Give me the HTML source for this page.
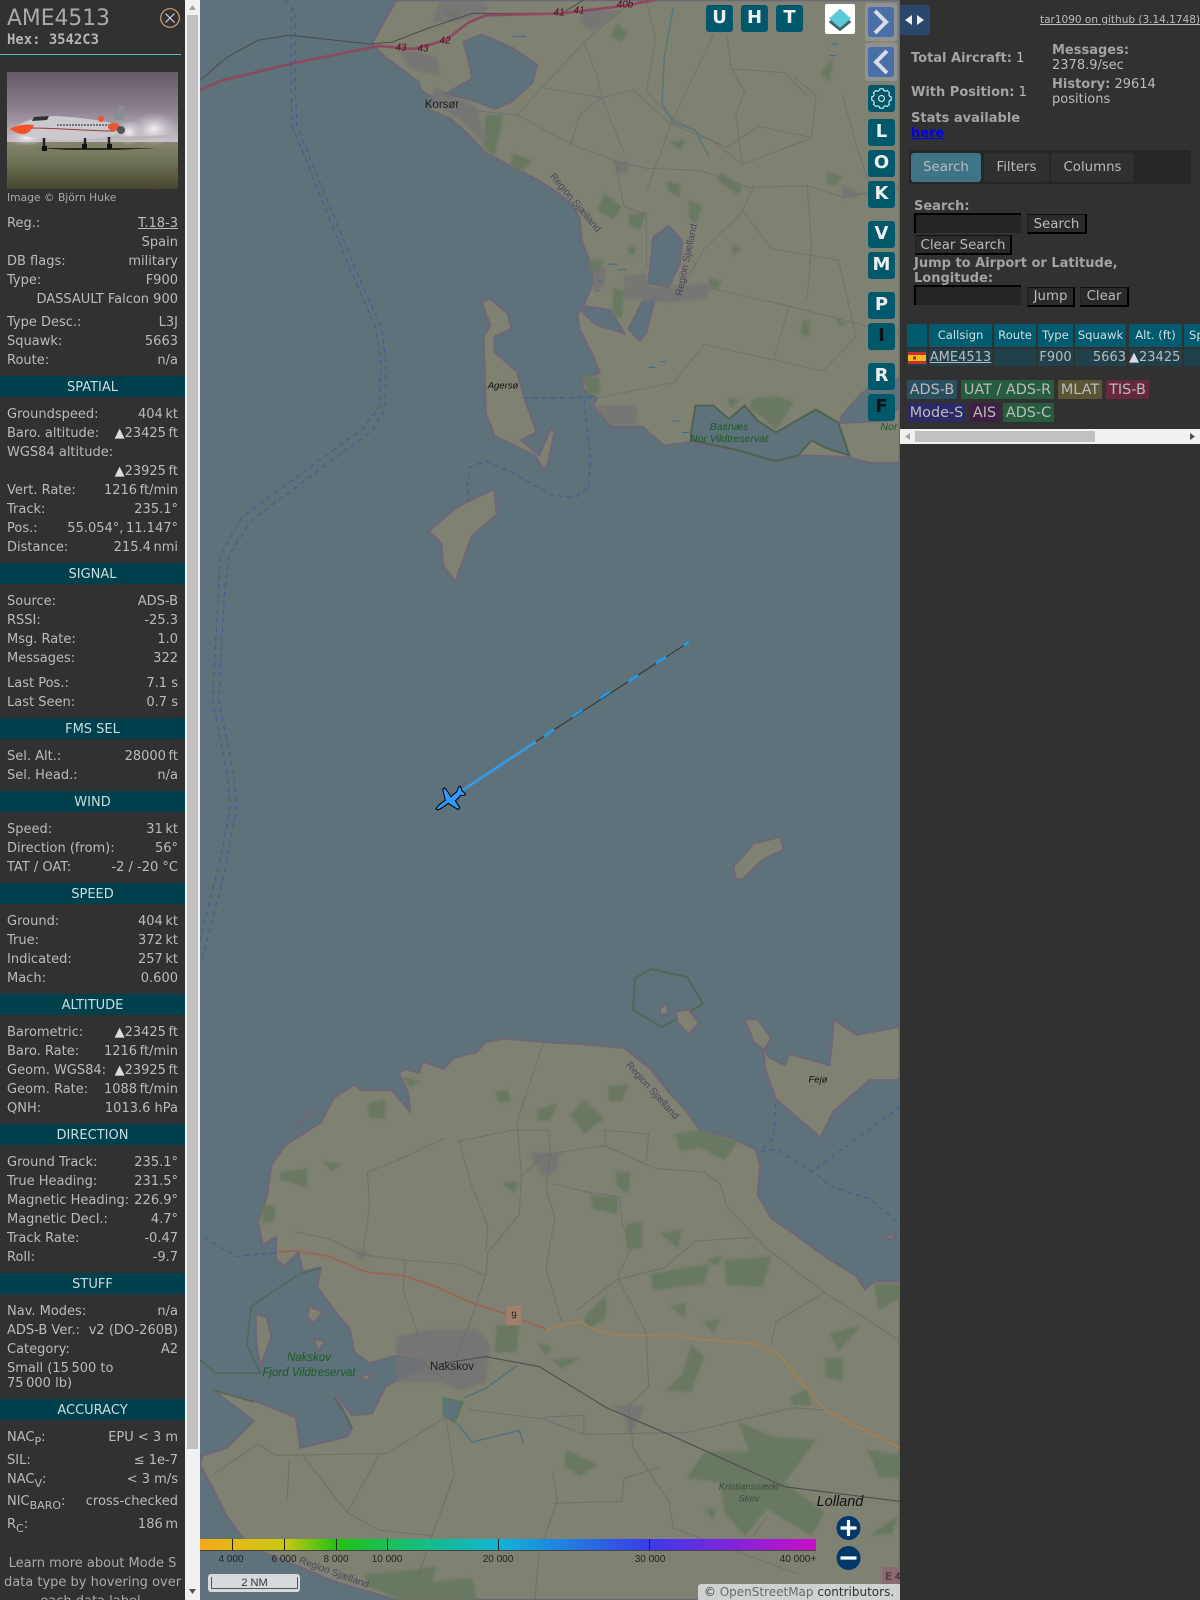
<!DOCTYPE html>
<html><head><meta charset="utf-8"><title>tar1090</title>
<style>
html,body{margin:0;padding:0;width:1200px;height:1600px;overflow:hidden;background:#313131;font-family:"DejaVu Sans",sans-serif;font-size:13px;color:#bbb}
#side{position:absolute;left:0;top:0;width:185px;height:1600px;background:#313131;overflow:hidden}
.r{position:absolute;left:7px;width:171px;margin-top:1px;display:flex;justify-content:space-between;line-height:19px;height:19px;white-space:nowrap}
.b{position:absolute;left:0;width:185px;height:21px;line-height:23px;background:#003f4c;color:#c8dde0;text-align:center}
.u{color:#ddd}
sub{font-size:11px;line-height:0;vertical-align:-4px}
#sb{position:absolute;left:185px;top:0;width:15px;height:1600px;background:#f1f1f1}
#map{position:absolute;left:200px;top:0;width:700px;height:1600px;background:#5d727a;overflow:hidden}
.mb{position:absolute;width:27px;height:27px;background:#00586a;border-radius:3px;color:#eee;font-weight:bold;font-size:18px;line-height:26px;text-align:center}
#right{position:absolute;left:900px;top:0;width:300px;height:1600px;background:#313131;overflow:hidden}
.a{position:absolute;white-space:nowrap;line-height:15px}
.bd{font-weight:bold;color:#a3a3a3}
.tab{position:absolute;top:153px;height:29px;line-height:29px;font-size:13.33px;text-align:center;border-radius:3px;background:#303030;color:#bbb}
.in{position:absolute;box-sizing:border-box;width:107px;height:20px;background:#252525;border-top:2px solid #000;border-left:2px solid #000}
.bt{position:absolute;box-sizing:border-box;height:20px;line-height:17px;font-size:13.33px;background:#2a2a2a;border-right:2px solid #000;border-bottom:2px solid #000;border-top:1px solid #111;border-left:1px solid #222;text-align:center;color:#bbb}
.th{position:absolute;top:324px;height:23px;line-height:22px;background:#005b6e;color:#cfdfe2;font-size:11.6px;text-align:center;white-space:nowrap;overflow:hidden}
.td{position:absolute;top:349px;height:17px;line-height:17px;background:#20414c;color:#bbb;white-space:nowrap;overflow:hidden}
.lg{position:absolute;height:19px;line-height:20px;font-size:14.4px;text-align:center;color:#bbb}
.cl{position:absolute;top:1554px;font:10px "Liberation Sans",sans-serif;color:#222;transform:translateX(-50%)}
</style></head><body>

<div id="side">
<div class="a" style="left:7px;top:6px;font-size:21.8px;line-height:26px;color:#aaa">AME4513</div>
<svg style="position:absolute;left:159px;top:7px" width="22" height="22" viewBox="0 0 22 22"><circle cx="11" cy="11" r="9.3" fill="none" stroke="#d0a070" stroke-width="1.2"/><path d="M6.5 6.5L15.5 15.5M15.5 6.5L6.5 15.5" stroke="#ddd" stroke-width="1.1"/></svg>
<div class="a" style="left:7px;top:32px;font:bold 13.9px 'DejaVu Sans Mono',monospace;line-height:16px;color:#b5b5b5">Hex: 3542C3</div>
<div style="position:absolute;left:0;top:54px;width:181px;height:1px;background:#57b9c4"></div>

<svg style="position:absolute;left:7px;top:72px" width="171" height="117" viewBox="0 0 171 117">
<defs><linearGradient id="sky" x1="0" y1="0" x2="0" y2="1"><stop offset="0" stop-color="#645a66"/><stop offset=".5" stop-color="#8a7f8c"/><stop offset="1" stop-color="#c9c2cc"/></linearGradient>
<linearGradient id="gr" x1="0" y1="0" x2="0" y2="1"><stop offset="0" stop-color="#85866c"/><stop offset=".5" stop-color="#6a6d50"/><stop offset="1" stop-color="#45462f"/></linearGradient>
<radialGradient id="gl"><stop offset="0" stop-color="#f4f0f6"/><stop offset="1" stop-color="#c7c0c9" stop-opacity="0"/></radialGradient></defs>
<rect width="171" height="72" fill="url(#sky)"/><rect y="70" width="171" height="47" fill="url(#gr)"/>
<ellipse cx="147" cy="57" rx="24" ry="17" fill="url(#gl)"/><ellipse cx="122" cy="60" rx="14" ry="14" fill="url(#gl)"/><ellipse cx="20" cy="66" rx="20" ry="8" fill="url(#gl)"/>
<path d="M30 76H150L110 78H60Z" fill="#2a2a25"/>
<path d="M100 65L168 63V65L120 69Z" fill="#b8b6b6"/>
<path d="M107 48L113 34H117L116 49Z" fill="#8a8d96"/>
<path d="M92 49L130 47V49L100 52Z" fill="#9a9aa0"/>
<path d="M3 57C14 51 28 44 48 44C70 45 100 49 116 54C120 58 118 60 112 62C90 68 60 71 24 65C14 63 7 61 3 57Z" fill="#c9c9ce"/>
<path d="M3 57C9 53 18 52 27 53C24 59 20 63 14 62C9 61 6 59 3 57Z" fill="#f2522a"/>
<path d="M27 45L42 44L40 48L25 49Z" fill="#333"/>
<path d="M50 53H110" stroke="#444" stroke-width="1.3" stroke-dasharray="2 1"/>
<path d="M24 56C50 56 85 59 108 59" stroke="#a23a3a" stroke-width="1" fill="none"/>
<ellipse cx="107" cy="55" rx="6" ry="4" fill="#e8553a"/><ellipse cx="94" cy="47" rx="3" ry="3" fill="#e8553a"/><circle cx="114" cy="58" r="4" fill="#555"/>
<path d="M37 66V78M78 66V76M102 65V76" stroke="#222" stroke-width="2.5"/>
<rect x="35" y="74" width="5" height="5" fill="#111"/><rect x="75" y="72" width="5" height="5" fill="#111"/><rect x="100" y="72" width="5" height="5" fill="#111"/>
<path d="M146 117L171 96" stroke="#9a3a2a" stroke-dasharray="2 3"/>
</svg>
<div class="a" style="left:7px;top:190px;font-size:10.7px;color:#aaa">Image © Björn Huke</div>

<div class="r" style="top:213px"><span>Reg.:</span><span style="text-decoration:underline">T.18-3</span></div>
<div class="r" style="top:232px"><span></span><span>Spain</span></div>
<div class="r" style="top:251px"><span>DB flags:</span><span>military</span></div>
<div class="r" style="top:270px"><span>Type:</span><span>F900</span></div>
<div class="r" style="top:289px"><span></span><span>DASSAULT Falcon 900</span></div>
<div class="r" style="top:312px"><span>Type Desc.:</span><span>L3J</span></div>
<div class="r" style="top:331px"><span>Squawk:</span><span>5663</span></div>
<div class="r" style="top:350px"><span>Route:</span><span>n/a</span></div>

<div class="b" style="top:376px">SPATIAL</div>
<div class="r" style="top:404px"><span>Groundspeed:</span><span>404&#8239;kt</span></div>
<div class="r" style="top:423px"><span>Baro. altitude:</span><span><span class="u">▲</span>23425&#8239;ft</span></div>
<div class="r" style="top:442px"><span>WGS84 altitude:</span></div>
<div class="r" style="top:461px"><span></span><span><span class="u">▲</span>23925&#8239;ft</span></div>
<div class="r" style="top:480px"><span>Vert. Rate:</span><span>1216&#8239;ft/min</span></div>
<div class="r" style="top:499px"><span>Track:</span><span>235.1°</span></div>
<div class="r" style="top:518px"><span>Pos.:</span><span>55.054°,&#8239;11.147°</span></div>
<div class="r" style="top:537px"><span>Distance:</span><span>215.4&#8239;nmi</span></div>

<div class="b" style="top:563px">SIGNAL</div>
<div class="r" style="top:591px"><span>Source:</span><span>ADS-B</span></div>
<div class="r" style="top:610px"><span>RSSI:</span><span>-25.3</span></div>
<div class="r" style="top:629px"><span>Msg. Rate:</span><span>1.0</span></div>
<div class="r" style="top:648px"><span>Messages:</span><span>322</span></div>
<div class="r" style="top:673px"><span>Last Pos.:</span><span>7.1 s</span></div>
<div class="r" style="top:692px"><span>Last Seen:</span><span>0.7 s</span></div>

<div class="b" style="top:718px">FMS SEL</div>
<div class="r" style="top:746px"><span>Sel. Alt.:</span><span>28000&#8239;ft</span></div>
<div class="r" style="top:765px"><span>Sel. Head.:</span><span>n/a</span></div>

<div class="b" style="top:791px">WIND</div>
<div class="r" style="top:819px"><span>Speed:</span><span>31&#8239;kt</span></div>
<div class="r" style="top:838px"><span>Direction (from):</span><span>56°</span></div>
<div class="r" style="top:857px"><span>TAT / OAT:</span><span>-2 / -20 °C</span></div>

<div class="b" style="top:883px">SPEED</div>
<div class="r" style="top:911px"><span>Ground:</span><span>404&#8239;kt</span></div>
<div class="r" style="top:930px"><span>True:</span><span>372&#8239;kt</span></div>
<div class="r" style="top:949px"><span>Indicated:</span><span>257&#8239;kt</span></div>
<div class="r" style="top:968px"><span>Mach:</span><span>0.600</span></div>

<div class="b" style="top:994px">ALTITUDE</div>
<div class="r" style="top:1022px"><span>Barometric:</span><span><span class="u">▲</span>23425&#8239;ft</span></div>
<div class="r" style="top:1041px"><span>Baro. Rate:</span><span>1216&#8239;ft/min</span></div>
<div class="r" style="top:1060px"><span>Geom. WGS84:</span><span><span class="u">▲</span>23925&#8239;ft</span></div>
<div class="r" style="top:1079px"><span>Geom. Rate:</span><span>1088&#8239;ft/min</span></div>
<div class="r" style="top:1098px"><span>QNH:</span><span>1013.6 hPa</span></div>

<div class="b" style="top:1124px">DIRECTION</div>
<div class="r" style="top:1152px"><span>Ground Track:</span><span>235.1°</span></div>
<div class="r" style="top:1171px"><span>True Heading:</span><span>231.5°</span></div>
<div class="r" style="top:1190px"><span>Magnetic Heading:</span><span>226.9°</span></div>
<div class="r" style="top:1209px"><span>Magnetic Decl.:</span><span>4.7°</span></div>
<div class="r" style="top:1228px"><span>Track Rate:</span><span>-0.47</span></div>
<div class="r" style="top:1247px"><span>Roll:</span><span>-9.7</span></div>

<div class="b" style="top:1273px">STUFF</div>
<div class="r" style="top:1301px"><span>Nav. Modes:</span><span>n/a</span></div>
<div class="r" style="top:1320px"><span>ADS-B Ver.:</span><span>v2 (DO-260B)</span></div>
<div class="r" style="top:1339px"><span>Category:</span><span>A2</span></div>
<div class="r" style="top:1358px"><span>Small (15&#8239;500 to</span></div>
<div class="r" style="top:1373px"><span>75&#8239;000 lb)</span></div>

<div class="b" style="top:1399px">ACCURACY</div>
<div class="r" style="top:1427px"><span>NAC<sub>P</sub>:</span><span>EPU &lt; 3 m</span></div>
<div class="r" style="top:1450px"><span>SIL:</span><span>≤ 1e-7</span></div>
<div class="r" style="top:1469px"><span>NAC<sub>V</sub>:</span><span>&lt; 3 m/s</span></div>
<div class="r" style="top:1491px"><span>NIC<sub>BARO</sub>:</span><span>cross-checked</span></div>
<div class="r" style="top:1514px"><span>R<sub>C</sub>:</span><span>186&#8239;m</span></div>
<div style="position:absolute;left:0;width:185px;top:1554px;line-height:19px;text-align:center;color:#aaa">Learn more about Mode S<br>data type by hovering over<br>each data label.</div>
</div>

<div id="sb">
<svg width="15" height="1600" style="position:absolute;left:0;top:0"><rect x="2" y="15" width="11" height="1434" fill="#c1c1c1"/><path d="M7.5 5L11 10H4Z" fill="#a3a3a3"/><path d="M4 1589H11L7.5 1594Z" fill="#505050"/></svg>
</div>

<div id="map">
<svg width="700" height="1600" style="position:absolute;left:0;top:0">
<defs><filter id="bl" x="-5%" y="-5%" width="110%" height="110%"><feGaussianBlur stdDeviation="2.5"/></filter></defs>
<!-- TOP -->
<g transform="scale(.4464,.3827)">
<g fill="#7f8172" stroke="#6d6878" stroke-width="2.4">
<path vector-effect="non-scaling-stroke" d="M440 0L410 60L385 115L415 150L450 180L490 215L495 235L530 265L510 285L560 310L600 350L640 400L680 425L740 460L790 495L830 530L850 570L855 630L875 690L880 740L865 780L855 810L845 820L850 860L880 930L895 975L855 990L860 1020L890 1040L880 1060L920 1115L990 1115L1040 1165L1100 1155L1220 1180L1290 1205L1340 1190L1450 1195L1500 1210L1568 1210L1568 0Z"/>
<path vector-effect="non-scaling-stroke" d="M630 790L650 780L690 820L698 860L660 880L660 920L710 970L730 1050L755 1130L720 1150L760 1190L785 1120L795 1125L780 1210L770 1228L750 1190L660 1140L640 1080L635 880L650 850Z"/>
<path vector-effect="non-scaling-stroke" d="M660 1278L665 1345L610 1400L572 1520L545 1480L540 1420L512 1388L570 1330L600 1310Z"/>
</g>
<g fill="#5d727a" stroke="#6d6878" stroke-width="2">
<path vector-effect="non-scaling-stroke" d="M590 110L630 90L700 125L755 170L745 215L700 265L660 285L620 265L550 245L610 205L600 150Z"/>
<path vector-effect="non-scaling-stroke" d="M1015 620L1050 590L1080 630L1075 690L1050 750L1005 740L1010 680Z"/>
<path vector-effect="non-scaling-stroke" d="M1020 775L1000 870L985 890L960 860L990 790Z"/>
<path vector-effect="non-scaling-stroke" d="M860 800L920 810L950 870L890 850L860 820Z"/>
<path vector-effect="non-scaling-stroke" d="M1435 1090L1480 1030L1520 995L1568 990L1568 1060L1540 1100L1435 1105Z"/>
</g>
<path vector-effect="non-scaling-stroke" d="M1100 1130L1110 1060L1150 1060L1185 1095L1220 1060L1250 1100L1290 1130L1350 1090L1380 1070L1430 1105L1455 1190L1400 1170L1370 1150L1340 1190L1290 1205L1200 1175L1100 1150Z" fill="#5d727a" stroke="#4f6350" stroke-width="2"/>
<g fill="#697861" filter="url(#bl)">
<path d="M640 300L680 300L660 410L635 385Z M700 400L745 420L720 450L695 430Z M905 505L945 540L925 575L890 550Z M960 560L1000 555L985 600L960 590Z M1095 520L1125 540L1110 585L1095 570Z M1165 450L1215 490L1205 510L1160 470Z M1045 475L1075 480L1075 515L1050 500Z M1405 450L1440 460L1425 485L1405 480Z M925 750L950 760L945 830L925 825Z M1350 835L1365 840L1365 880L1345 875Z M1140 725L1170 735L1160 755L1140 750Z M1425 830L1450 850L1430 850Z M855 980L895 985L895 1030L870 1030Z M1240 1040L1290 1035L1330 1050L1290 1125L1260 1090L1230 1070Z M935 60L960 90L940 110L920 95Z M1050 370L1090 365L1075 390Z M870 680L905 680L890 720L875 710Z M960 645L975 645L975 665L960 665Z M545 30L585 25L570 55Z M1180 1040L1210 1045L1190 1065Z M1190 640L1215 650L1195 665Z M1390 190L1420 150L1410 215Z"/>
</g>
<g fill="#737274" opacity=".7" filter="url(#bl)">
<path d="M530 230L620 280L640 380L580 310L510 260Z M950 720L1000 715L1005 745L1030 750L1140 740L1135 780L1050 790L950 780Z M880 1060L980 1060L975 1110L920 1110Z M520 60L610 50L650 20L620 0L540 0Z M860 20L940 30L880 80L850 60Z M440 120L530 150L540 200L470 180Z M930 420L960 425L955 455L930 450Z M1440 480L1480 510L1440 520Z M880 700L910 700L905 750L880 760Z"/>
</g>
<g fill="none" stroke="#6b6d6f" stroke-width="1" opacity=".75">
<path vector-effect="non-scaling-stroke" d="M580 285L710 300L790 350L840 380L930 420L1000 440L1120 445L1230 490L1360 485L1440 515L1568 490"/>
<path vector-effect="non-scaling-stroke" d="M710 300L860 110L950 20"/>
<path vector-effect="non-scaling-stroke" d="M1000 500L1060 310L1150 90"/>
<path vector-effect="non-scaling-stroke" d="M1240 490L1210 560L1130 650L1070 770"/>
<path vector-effect="non-scaling-stroke" d="M930 420L950 540L1000 560L1000 600L1000 700"/>
<path vector-effect="non-scaling-stroke" d="M860 110L890 200L900 255L950 400"/>
<path vector-effect="non-scaling-stroke" d="M770 230L900 255L970 235L1050 320L1180 385L1250 330L1370 360"/>
<path vector-effect="non-scaling-stroke" d="M1130 750L1320 800L1568 875"/>
<path vector-effect="non-scaling-stroke" d="M1320 800L1285 940L1395 970L1470 880"/>
<path vector-effect="non-scaling-stroke" d="M890 1040L1060 1000L1130 900L1280 940"/>
<path vector-effect="non-scaling-stroke" d="M1190 180L1220 240L1200 300L1215 430L1370 360L1380 250L1330 200"/>
<path vector-effect="non-scaling-stroke" d="M1360 485L1370 640L1360 780"/>
<path vector-effect="non-scaling-stroke" d="M1215 550L1280 650L1430 680L1470 880"/>
<path vector-effect="non-scaling-stroke" d="M1440 250L1470 380L1500 480"/>
<path vector-effect="non-scaling-stroke" d="M1000 0L1020 100L1000 240L1060 310L1150 370L1215 430"/>
<path vector-effect="non-scaling-stroke" d="M850 300L830 380M900 255L850 300"/>
<path vector-effect="non-scaling-stroke" d="M1180 90L1190 180L1310 190L1360 250"/>
</g>
<path vector-effect="non-scaling-stroke" d="M1060 20L1040 150L1035 270L1060 320L1110 340L1140 410" fill="none" stroke="#57767a" stroke-width="1.3"/>
<path vector-effect="non-scaling-stroke" d="M0 210L60 150L130 105L200 92L380 115L430 110L520 70L610 35L810 35L860 0" fill="none" stroke="#4a4c4e" stroke-width="1"/>
<path vector-effect="non-scaling-stroke" d="M0 235L50 210L210 165L400 120L480 128L550 105L600 60L640 40L810 35L950 15L1020 0" fill="none" stroke="#8d4960" stroke-width="2.6"/>
<g fill="none" stroke="#3a4fa0" stroke-width="1" stroke-dasharray="5 4" opacity=".7">
<path vector-effect="non-scaling-stroke" d="M205 20L203 200L207 330L265 500L335 700L395 860L405 950L403 1060L365 1120L95 1350L45 1450L40 1568"/>
<path vector-effect="non-scaling-stroke" d="M190 0L213 30L213 200L217 330L277 500L347 700L407 860L417 950L415 1070L385 1125L115 1360L65 1450L53 1568"/>
<path vector-effect="non-scaling-stroke" d="M725 1040L880 1038"/>
<path vector-effect="non-scaling-stroke" d="M860 1045L875 1200L870 1275L840 1300L790 1295L700 1235L640 1205L605 1220L598 1270L603 1310"/>
</g>
<g stroke="#3f6a9a" stroke-width="1"><path vector-effect="non-scaling-stroke" d="M915 690H935M935 705H955M890 735H905M885 760H895M1005 960H1020M1030 945H1045M1060 1100H1075M1080 1130H1095M700 95H730M1415 115H1430M1410 145H1425"/></g>
</g>

<!-- MID -->
<g transform="translate(0,600) scale(.4464,.3333)">
<path vector-effect="non-scaling-stroke" d="M1195 800L1240 730L1300 710L1308 750L1260 780L1215 840L1198 835Z" fill="#7f8172" stroke="#6d6878" stroke-width="2.4"/>
<g fill="none" stroke="#3a4fa0" stroke-width="1" stroke-dasharray="5 4" opacity=".7">
<path vector-effect="non-scaling-stroke" d="M40 0L28 300L60 520L68 620L45 780L0 1020"/>
<path vector-effect="non-scaling-stroke" d="M54 0L42 300L75 520L82 620L58 800L5 1080"/>
</g>
</g>
<path d="M435 978L451 969L487 977L503 1004L462 1027L433 1010Z" fill="none" stroke="#4f6a58" stroke-width="2"/>

<!-- BOTTOM -->
<g transform="translate(0,1000) scale(.4464,.3827)">
<path vector-effect="non-scaling-stroke" fill="#7f8172" stroke="#6d6878" stroke-width="2.4" d="M0 1215L30 1280L60 1350L110 1430L200 1470L300 1520L440 1568L1568 1568L1568 735L1510 735L1490 755L1470 720L1400 670L1330 610L1280 570L1250 510L1255 430L1245 390L1190 360L1120 340L1090 290L1050 240L1010 180L950 125L860 115L770 110L680 100L640 110L620 135L570 150L545 180L500 160L490 190L460 180L445 190L465 240L470 290L430 235L360 235L345 220L300 255L270 320L190 380L160 430L150 510L130 580L140 640L170 620L170 680L190 695L220 660L230 710L270 700L262 750L300 810L335 860L345 920L380 950L440 930L490 940L500 960L445 990L415 1010L385 1080L340 1085L300 1020L340 1120L330 1140L225 1170L215 1090L130 1050L30 1020L120 1100L60 1170L5 1190Z"/>
<g fill="#7f8172" stroke="#6d6878" stroke-width="2.4">
<path vector-effect="non-scaling-stroke" d="M1220 50L1250 50L1280 100L1265 130L1275 150L1310 170L1320 140L1410 170L1420 50L1470 90L1568 70L1568 210L1500 210L1420 290L1390 360L1340 310L1290 260L1265 180L1262 130L1240 110Z"/>
<path vector-effect="non-scaling-stroke" d="M1065 30L1095 25L1118 60L1095 90L1070 60Z"/>
<path vector-effect="non-scaling-stroke" d="M125 820L150 830L160 880L135 960L125 890Z"/>
<path vector-effect="non-scaling-stroke" d="M245 800L275 815L255 845L240 830Z"/>
<path vector-effect="non-scaling-stroke" d="M255 885L280 890L265 920Z"/>
<path vector-effect="non-scaling-stroke" d="M355 985L385 975L375 995Z"/>
<path vector-effect="non-scaling-stroke" d="M1525 620L1560 610L1550 625Z"/>
<path vector-effect="non-scaling-stroke" d="M215 330L240 295L260 290L235 305L220 332Z"/>
<path vector-effect="non-scaling-stroke" d="M1030 20L1045 10L1050 35L1030 40Z"/>
</g>
<path vector-effect="non-scaling-stroke" d="M545 1040L590 1050L570 1105L545 1085Z" fill="#5d727a" stroke="#5a7a50" stroke-width="1.5"/>
<path vector-effect="non-scaling-stroke" d="M0 940L35 975L135 975L105 900L115 800L225 715L270 700" fill="none" stroke="#4f6a58" stroke-width="1.6"/>
<path vector-effect="non-scaling-stroke" d="M300 1040L330 1090L340 1120M440 930L490 940L540 985M30 1020L120 1050" fill="none" stroke="#4f6a58" stroke-width="1.6"/>
<g fill="#697861" filter="url(#bl)">
<path d="M660 240L690 235L695 265L670 270Z M830 300L860 260L905 310L860 350Z M755 285L800 270L785 315L755 315Z M915 225L960 220L945 265L915 265Z M1065 350L1120 340L1205 370L1175 420L1120 385L1075 395Z M875 510L935 515L935 560L880 545Z M955 585L990 580L990 650L955 650Z M1175 680L1280 670L1260 750L1180 745Z M1010 715L1140 690L1130 740L1015 760Z M665 850L715 850L710 920L660 920Z M1040 1020L1080 980L1100 900L1130 930L1100 1025Z M1205 1100L1280 1140L1380 1150L1310 1260L1400 1340L1370 1400L1270 1330L1220 1400L1175 1340L1165 1260L1090 1250L1130 1180L1230 1180Z M820 1175L890 1215L850 1245L815 1215Z M1410 870L1480 850L1430 920Z M1400 935L1440 935L1440 995L1400 985Z M1495 1175L1568 1190L1568 1250L1520 1245Z M790 940L850 935L810 965Z M1320 1040L1360 1015L1370 1060L1330 1060Z M140 535L170 540L165 580L140 585Z M370 1500L470 1490L530 1480L520 1520L610 1510L620 1568L450 1568L370 1530Z M180 450L240 440L240 490L180 470Z M275 420L315 430L295 450Z M1510 740L1568 740L1568 780L1520 810Z M1050 800L1090 790L1085 830Z M930 450L965 450L960 505L935 490Z M1125 840L1165 835L1150 870Z M860 830L910 770L910 830L870 860Z M375 270L415 260L415 310L380 310Z M455 200L495 215L470 230Z M1500 1400L1565 1345L1550 1395Z M1130 1330L1155 1330L1150 1360Z M675 480L710 475L705 505Z M755 895L790 905L775 930Z M1135 680L1170 665L1160 695Z M1030 610L1080 600L1070 650Z"/>
</g>
<g fill="#737274" opacity=".75" filter="url(#bl)">
<path d="M440 880L520 860L620 860L650 900L640 1000L580 1020L540 1000L440 1000Z M740 400L805 400L800 450L770 460L750 430Z M925 1060L995 1060L985 1095L960 1140L950 1090Z M345 650L380 660L360 685Z"/>
</g>
<g fill="none" stroke="#696b6e" stroke-width="1" opacity=".75">
<path vector-effect="non-scaling-stroke" d="M720 460L770 405L905 380L1020 440L1130 450L1165 480L1180 540L1270 650L1400 765L1568 890"/>
<path vector-effect="non-scaling-stroke" d="M770 110L710 320L720 460L715 560L645 660L640 720L600 860L570 940"/>
<path vector-effect="non-scaling-stroke" d="M575 370L700 340L780 340L785 400L775 490L795 570L775 700L810 840"/>
<path vector-effect="non-scaling-stroke" d="M210 605L290 625L360 665L460 680L580 690L640 720"/>
<path vector-effect="non-scaling-stroke" d="M580 370L610 490L645 590L640 660"/>
<path vector-effect="non-scaling-stroke" d="M375 450L380 540L365 660M375 450L440 420L550 360"/>
<path vector-effect="non-scaling-stroke" d="M460 680L455 760L490 880"/>
<path vector-effect="non-scaling-stroke" d="M600 1070L770 1095L860 1135L1090 1130L1330 1065L1400 1072"/>
<path vector-effect="non-scaling-stroke" d="M960 1060L970 1170L1050 1310L1060 1380L1340 1500"/>
<path vector-effect="non-scaling-stroke" d="M130 1160L170 1190L420 1185L550 1090"/>
<path vector-effect="non-scaling-stroke" d="M550 1090L570 1240L520 1400L470 1568"/>
<path vector-effect="non-scaling-stroke" d="M790 480L860 500L940 515L945 580L965 650L935 725L1000 870L1005 1010L960 1060"/>
<path vector-effect="non-scaling-stroke" d="M845 810L935 730L1040 700L1110 630L1240 620"/>
<path vector-effect="non-scaling-stroke" d="M790 1230L800 1310L760 1440L750 1568"/>
<path vector-effect="non-scaling-stroke" d="M790 1315L945 1310L950 1250L1030 1220"/>
<path vector-effect="non-scaling-stroke" d="M230 1190L330 1340L400 1190M330 1340L400 1385L520 1400"/>
<path vector-effect="non-scaling-stroke" d="M1400 765L1290 840L1280 900M905 340L1005 350L1000 420M905 340L910 380"/>
<path vector-effect="non-scaling-stroke" d="M770 1090L860 1085L860 1135M30 1240L130 1160M200 1200L195 1310M1270 1350L1240 1400"/>
</g>
<path vector-effect="non-scaling-stroke" d="M590 1040L640 1015L710 955M575 1105L610 1155L715 1125L725 1160" fill="none" stroke="#4e7283" stroke-width="1.3"/>
<path vector-effect="non-scaling-stroke" d="M540 950L640 932L760 958L910 1065L1050 1135L1310 1272L1568 1310" fill="none" stroke="#4a4c4e" stroke-width="1"/>
<path vector-effect="non-scaling-stroke" d="M175 658L215 655L290 670L370 710L460 722L520 745L620 797L700 825L775 860" fill="none" stroke="#a3614f" stroke-width="1.6"/>
<path vector-effect="non-scaling-stroke" d="M775 860L850 840L890 865L930 877L1085 878L1100 885L1245 898L1270 915L1290 917L1400 1072L1480 1120L1568 1170" fill="none" stroke="#a5804f" stroke-width="1.6"/>
<g fill="none" stroke="#3a4fa0" stroke-width="1" stroke-dasharray="5 4" opacity=".7">
<path vector-effect="non-scaling-stroke" d="M10 620L80 670L170 660"/>
<path vector-effect="non-scaling-stroke" d="M1290 270L1285 360L1255 395L1290 390L1380 455L1410 485L1500 520L1568 585"/>
<path vector-effect="non-scaling-stroke" d="M1380 440L1568 280"/>
</g>
</g>

<!-- labels -->
<g font-family="Liberation Sans,sans-serif" text-anchor="middle" dominant-baseline="central">
<g fill="#202020" font-size="11.5"><text x="242" y="105">Korsør</text><text x="252" y="1367">Nakskov</text></g>
<g fill="#4f4560" font-size="10">
<text transform="translate(375,203) rotate(50)">Region Sjælland</text>
<text transform="translate(487,260) rotate(-78)">Region Sjælland</text>
<text transform="translate(452,1091) rotate(48)">Region Sjælland</text>
<text transform="translate(134,1573) rotate(20)">Region Sjælland</text>
</g>
<g font-style="italic">
<text x="303" y="386" font-size="9.5" fill="#111">Agersø</text>
<text x="618" y="1080" font-size="9.5" fill="#111">Fejø</text>
<g fill="#1f5a22" font-size="10.5"><text x="529" y="427">Basnæs</text><text x="529" y="439">Nor Vildtreservat</text><text x="689" y="427">Nor</text>
<text x="109" y="1358" font-size="11.5">Nakskov</text><text x="109" y="1373" font-size="11.5">Fjord Vildtreservat</text></g>
<g fill="#3e4a42" font-size="9.5"><text x="549" y="1487">Kristianssæde</text><text x="549" y="1499">Skov</text></g>
<text x="640" y="1502" font-size="14.5" fill="#111">Lolland</text>
<g fill="#5a0a20" font-size="10"><text x="201" y="48">43</text><text x="223" y="49">43</text><text x="245" y="41">42</text><text x="359" y="13">41</text><text x="379" y="11">41</text><text x="425" y="5">40b</text></g>
</g>
<rect x="306.500" y="1306" width="15" height="19" rx="2" fill="#a0806c"/><text x="314" y="1316" font-size="10" fill="#222">9</text>
<rect x="682" y="1567" width="22" height="19" rx="2" fill="#8b6a70"/><text x="693" y="1577" font-size="10" fill="#222">E 4</text>
<rect x="673" y="30" width="22" height="17" rx="2" fill="#8f8770"/>
</g>

<!-- track -->
<path d="M489 642L335.700 741.700" stroke="#333" stroke-width="1"/>
<g stroke="#1e9bee" stroke-width="2.400"><path d="M489 642L484 645.500M456 663.300L466 656.700M428.300 681.700L438.300 675M400 698.300L410 691.700M372.300 716.700L382.300 710M344 736.700L354 729.300"/></g>
<path d="M335.700 741.700L263 790" stroke="#2f9df2" stroke-width="2.400"/>
<g transform="translate(220,620) scale(.3333)">
<path d="M48 566C55 555 68 546 76 541L68 508L74 503C82 512 88 522 93 531C97 525 102 521 110 516L116 501L122 499L126 513L137 521L134 526L122 526C118 532 112 538 106 543L119 562L115 569C103 562 92 555 85 550C75 558 64 566 53 570Z" fill="#3399ff" stroke="#000" stroke-width="3"/>
</g>
</svg>

<div class="mb" style="left:506px;top:5px">U</div>
<div class="mb" style="left:541px;top:5px">H</div>
<div class="mb" style="left:576px;top:5px">T</div>
<div style="position:absolute;left:625px;top:4px;width:30px;height:30px;background:#fff;border-radius:2px">
<svg width="30" height="30" viewBox="0 0 30 30"><path d="M15 10L25 18L15 26L5 18Z" fill="#44666a" stroke="#44666a" stroke-width="2" stroke-linejoin="round"/><path d="M15 6L24.500 14.500L15 22.500L5.500 14.500Z" fill="#5cc9d8" stroke="#5cc9d8" stroke-width="2" stroke-linejoin="round"/></svg></div>

<div style="position:absolute;left:665px;top:3px;width:32px;height:38px;background:#8f9292;border-radius:3px"></div>
<div style="position:absolute;left:668px;top:7px;width:26px;height:30px;background:#4a6fa8;border-radius:3px"></div>
<svg style="position:absolute;left:668px;top:7px" width="26" height="30"><path d="M7 4L18 15L7 26" fill="none" stroke="#d6dde6" stroke-width="4"/></svg>
<div style="position:absolute;left:665px;top:43px;width:32px;height:38px;background:#8f9292;border-radius:3px"></div>
<div style="position:absolute;left:668px;top:47px;width:26px;height:30px;background:#4a6fa8;border-radius:3px"></div>
<svg style="position:absolute;left:668px;top:47px" width="26" height="30"><path d="M19 4L8 15L19 26" fill="none" stroke="#d6dde6" stroke-width="4"/></svg>

<div class="mb" style="left:668px;top:85px">
<svg width="27" height="27" viewBox="-15 -15 30 30" fill="none" stroke="#e8eef0" stroke-width="1.200" style="position:absolute;left:0;top:0">
<circle r="3.300"/>
<g><path d="M-2.600 -8.800L-1.800 -10.800H1.800L2.600 -8.800A9.200 9.200 0 0 1 4.380 -8.060"/></g>
<g transform="rotate(45)"><path d="M-2.600 -8.800L-1.800 -10.800H1.800L2.600 -8.800A9.200 9.200 0 0 1 4.380 -8.060"/></g>
<g transform="rotate(90)"><path d="M-2.600 -8.800L-1.800 -10.800H1.800L2.600 -8.800A9.200 9.200 0 0 1 4.380 -8.060"/></g>
<g transform="rotate(135)"><path d="M-2.600 -8.800L-1.800 -10.800H1.800L2.600 -8.800A9.200 9.200 0 0 1 4.380 -8.060"/></g>
<g transform="rotate(180)"><path d="M-2.600 -8.800L-1.800 -10.800H1.800L2.600 -8.800A9.200 9.200 0 0 1 4.380 -8.060"/></g>
<g transform="rotate(225)"><path d="M-2.600 -8.800L-1.800 -10.800H1.800L2.600 -8.800A9.200 9.200 0 0 1 4.380 -8.060"/></g>
<g transform="rotate(270)"><path d="M-2.600 -8.800L-1.800 -10.800H1.800L2.600 -8.800A9.200 9.200 0 0 1 4.380 -8.060"/></g>
<g transform="rotate(315)"><path d="M-2.600 -8.800L-1.800 -10.800H1.800L2.600 -8.800A9.200 9.200 0 0 1 4.380 -8.060"/></g>
</svg></div>
<div class="mb" style="left:668px;top:119px">L</div>
<div class="mb" style="left:668px;top:150px">O</div>
<div class="mb" style="left:668px;top:181px">K</div>
<div class="mb" style="left:668px;top:221px">V</div>
<div class="mb" style="left:668px;top:252px">M</div>
<div class="mb" style="left:668px;top:292px">P</div>
<div class="mb" style="left:668px;top:323px;color:#111">I</div>
<div class="mb" style="left:668px;top:363px">R</div>
<div class="mb" style="left:668px;top:394px;color:#111">F</div>

<!-- colour bar (page x - 200) -->
<div style="position:absolute;left:0;top:1539px;width:615.500px;height:12px;background:linear-gradient(90deg,#f2a71d 0,#e6b811 32px,#c9c80f 85px,#22c20f 136px,#18c058 187px,#0fb5d6 298px,#3a3aeb 450px,#c80fc8 615px);border-bottom:1px solid #444;box-sizing:border-box"></div>
<div style="position:absolute;left:32px;top:1539px;width:1px;height:11px;background:#222"></div>
<div style="position:absolute;left:84px;top:1539px;width:1px;height:11px;background:#222"></div>
<div style="position:absolute;left:136px;top:1539px;width:1px;height:11px;background:#222"></div>
<div style="position:absolute;left:187px;top:1539px;width:1px;height:11px;background:#222"></div>
<div style="position:absolute;left:298px;top:1539px;width:1px;height:11px;background:#222"></div>
<div style="position:absolute;left:449px;top:1539px;width:1px;height:11px;background:#222"></div>
<div class="cl" style="left:31px">4 000</div>
<div class="cl" style="left:84px">6 000</div>
<div class="cl" style="left:136px">8 000</div>
<div class="cl" style="left:187px">10 000</div>
<div class="cl" style="left:298px">20 000</div>
<div class="cl" style="left:450px">30 000</div>
<div class="cl" style="left:598px">40 000+</div>

<svg style="position:absolute;left:635px;top:1515px" width="28" height="58"><circle cx="13.500" cy="13" r="12" fill="#00386b"/><path d="M13.500 5V21M5.500 13H21.500" stroke="#fff" stroke-width="3.200"/><circle cx="13.500" cy="43" r="12" fill="#00386b"/><path d="M5.500 43H21.500" stroke="#fff" stroke-width="3.200"/></svg>

<div style="position:absolute;left:8px;top:1574px;width:92px;height:18px;background:#d6dadc;border-radius:3px"></div>
<div style="position:absolute;left:11px;top:1577px;width:85px;height:11px;border:1px solid #555;border-top:none;font:11px/12px 'Liberation Sans',sans-serif;color:#333;text-align:center">2 NM</div>
<div style="position:absolute;left:498px;top:1584px;width:202px;height:16px;background:#cfd2d2;border-radius:3px 0 0 0;font:12px/16px 'DejaVu Sans',sans-serif;color:#333;text-align:center;white-space:nowrap">© <span style="color:#6a6a6a">OpenStreetMap</span> contributors.</div>
</div>

<div id="right">
<div style="position:absolute;left:0;top:5px;width:30px;height:30px;background:#2a4668;border-radius:0 3px 3px 0">
<svg width="30" height="30"><path d="M5 15L12 10V20ZM17 10L24 15L17 20Z" fill="#eee"/></svg></div>
<div class="a" style="left:140px;top:13px;font-size:10.5px;color:#bbb;text-decoration:underline">tar1090 on github (3.14.1748)</div>

<div class="a" style="left:11px;top:51px"><span class="bd">Total Aircraft:</span> 1</div>
<div class="a" style="left:11px;top:85px"><span class="bd">With Position:</span> 1</div>
<div class="a bd" style="left:11px;top:111px">Stats available</div>
<div class="a" style="left:11px;top:126px;font-weight:bold;color:#0000ee;text-decoration:underline">here</div>
<div class="a bd" style="left:152px;top:43px">Messages:</div>
<div class="a" style="left:152px;top:58px">2378.9/sec</div>
<div class="a" style="left:152px;top:77px"><span class="bd">History:</span> 29614</div>
<div class="a" style="left:152px;top:92px">positions</div>

<div style="position:absolute;left:9px;top:150px;width:282px;height:34px;background:#272727;border-radius:3px"></div>
<div class="tab" style="left:11px;width:70px;background:#3f7386">Search</div>
<div class="tab" style="left:84px;width:65px">Filters</div>
<div class="tab" style="left:151px;width:83px">Columns</div>

<div class="a bd" style="left:14px;top:199px">Search:</div>
<div class="in" style="left:14px;top:213px"></div>
<div class="bt" style="left:127px;top:214px;width:60px;line-height:19px">Search</div>
<div class="bt" style="left:15px;top:235px;width:97px;line-height:19px">Clear Search</div>
<div class="a bd" style="left:14px;top:256px">Jump to Airport or Latitude,</div>
<div class="a bd" style="left:14px;top:271px">Longitude:</div>
<div class="in" style="left:14px;top:285px"></div>
<div class="bt" style="left:127px;top:287px;width:48px">Jump</div>
<div class="bt" style="left:180px;top:287px;width:49px">Clear</div>

<div class="th" style="left:7px;width:20px"></div>
<div class="th" style="left:29px;width:63px">Callsign</div>
<div class="th" style="left:94px;width:42px">Route</div>
<div class="th" style="left:138px;width:35px">Type</div>
<div class="th" style="left:175px;width:51px">Squawk</div>
<div class="th" style="left:229px;width:53px">Alt. (ft)</div>
<div class="th" style="left:284px;width:16px;text-align:left;text-indent:5px">Speed</div>
<div class="td" style="left:7px;width:20px"><svg width="20" height="17"><rect x="1" y="3" width="18" height="12" fill="#c8302a"/><rect x="1" y="6" width="18" height="6" fill="#f0bc20"/><rect x="6" y="7.500" width="3" height="3" fill="#a03020"/></svg></div>
<div class="td" style="left:29px;width:63px;text-decoration:underline;text-align:center">AME4513</div>
<div class="td" style="left:94px;width:42px"></div>
<div class="td" style="left:138px;width:35px;text-align:center">F900</div>
<div class="td" style="left:175px;width:51px;text-align:right">5663</div>
<div class="td" style="left:229px;width:53px;text-align:right"><span style="color:#ddd">▲</span>23425&nbsp;</div>
<div class="td" style="left:284px;width:16px"></div>

<div class="lg" style="left:7px;top:380px;width:50px;background:#2a4f60">ADS-B</div>
<div class="lg" style="left:61px;top:380px;width:93px;background:#275c3e">UAT / ADS-R</div>
<div class="lg" style="left:158px;top:380px;width:44px;background:#5a5534">MLAT</div>
<div class="lg" style="left:206px;top:380px;width:43px;background:#66283f">TIS-B</div>
<div class="lg" style="left:7px;top:403px;width:59px;background:#2c2a66">Mode-S</div>
<div class="lg" style="left:70px;top:403px;width:29px;background:#3f1f45">AIS</div>
<div class="lg" style="left:103px;top:403px;width:51px;background:#275c3e">ADS-C</div>

<div style="position:absolute;left:0;top:429px;width:300px;height:15px;background:#f1f1f1"></div>
<div style="position:absolute;left:15px;top:431px;width:180px;height:11px;background:#c1c1c1"></div>
<svg style="position:absolute;left:0;top:429px" width="300" height="15"><path d="M10 4V11L5 7.500Z" fill="#a3a3a3"/><path d="M290 4V11L295 7.500Z" fill="#505050"/></svg>
</div>
</body></html>
